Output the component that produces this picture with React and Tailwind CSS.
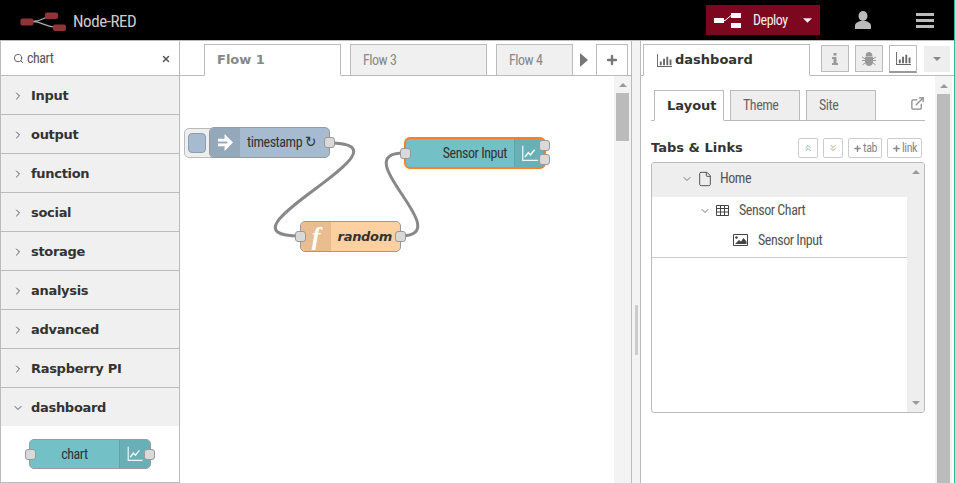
import { ChevronRight, ChevronDown, ChevronsUp, ChevronsDown, Search, X, Plus, ExternalLink, File } from "lucide-react";

const narrow = "font-['Roboto',sans-serif] [font-stretch:75%] tracking-[-0.45px]";
const bold = "font-['DejaVu_Sans',sans-serif] font-bold";
const boldTight = "font-['DejaVu_Sans',sans-serif] font-bold tracking-[-0.3px]";

const categories = ["Input", "output", "function", "social", "storage", "analysis", "advanced", "Raspberry PI"];

const ChartIcon = ({ className }) => (
  <svg viewBox="0 0 20 20" className={className} fill="none" stroke="currentColor">
    <path d="M1.5 1v17h18" strokeWidth="1.5" />
    <path d="M4 14l4-5 2.5 2.5 5-6" strokeWidth="1.8" />
  </svg>
);

const BarsIcon = ({ className }) => (
  <svg viewBox="0 0 16 14" className={className} fill="currentColor">
    <path d="M0 0h1v13h15v1H0zM3 8h2v4H3zM6.500 5h2v7h-2zM10 3h2v9h-2zM13.500 6h2v6h-2z" />
  </svg>
);

const Port = ({ className }) => (
  <div className={`absolute w-[11px] h-[11px] rounded-[3px] bg-[#d9d9d9] border border-[#999] ${className}`} />
);

const SidebarTab = ({ children, active }) => (
  <div className={`w-[70px] h-[31px] -mb-px pl-[12px] border border-[#bbb] flex items-center text-[13px] ${active ? `bg-white border-b-white text-[#333] ${bold}` : `bg-[#eee] text-[#666] text-[14px] ${narrow}`}`}>
    {children}
  </div>
);

const SmallBtn = ({ children, className }) => (
  <div className={`h-[20px] flex items-center justify-center border border-[#ccc] rounded-[2px] text-[12px] text-[#888] ${narrow} ${className}`}>
    {children}
  </div>
);

const Palette = () => (
  <aside className="w-[180px] h-full shrink-0 flex flex-col border-x border-b border-[#bbb] bg-white">
    <div className="h-[35px] shrink-0 flex items-center border-b border-[#bbb] pl-[12px] pr-[8px] pt-[1px]">
      <Search size={11} strokeWidth={2} className="text-[#555]" />
      <span className={`ml-[3px] text-[14px] text-[#555] flex-1 ${narrow}`}>chart</span>
      <X size={10} strokeWidth={3.500} className="text-[#555]" />
    </div>
    {categories.map((name) => (
      <div key={name} className="h-[39px] shrink-0 flex items-center bg-[#f0f0f0] border-b border-[#bbb] pl-[11px] pt-[1px]">
        <ChevronRight size={12} className="text-[#555]" />
        <span className={`ml-[7px] text-[13px] text-[#333] ${boldTight}`}>{name}</span>
      </div>
    ))}
    <div className="h-[38px] shrink-0 flex items-center bg-[#f0f0f0] pl-[11px] pt-[1px]">
      <ChevronDown size={12} className="text-[#555]" />
      <span className={`ml-[7px] text-[13px] text-[#333] ${boldTight}`}>dashboard</span>
    </div>
    <div className="flex-1 flex justify-center pt-[13px]">
      <div className="relative w-[122px] h-[30px] rounded-[5px] bg-[#73c0c6] border border-[#999] flex">
        <Port className="-left-[5px] top-[9px]" />
        <span className={`flex-1 flex items-center justify-center text-[14px] text-[#333] ${narrow}`}>chart</span>
        <div className="w-[31px] bg-[#68b0b6] border-l border-[#5ea4aa] flex items-center justify-center rounded-r-[5px]">
          <ChartIcon className="w-[16px] h-[16px] text-[#eef7f8]" />
        </div>
        <Port className="-right-[5px] top-[9px]" />
      </div>
    </div>
  </aside>
);

const Canvas = () => (
  <div className="relative flex-1 bg-white overflow-hidden">
    {/* wires and nodes sit on the flow canvas at their own coordinates */}
    <svg className="absolute left-0 top-0 w-[434px] h-[407px]" viewBox="180 76 434 407" fill="none" stroke="#888" strokeWidth="3">
      <path d="M329 143C425 143 204 236 300 236" />
      <path d="M400 236C460 236 344 153 404 153" />
    </svg>

    <div className="absolute left-[4px] top-[52px] w-[34px] h-[30px] rounded-[5px] bg-[#eee] border border-[#bbb] flex items-center pl-[3px]">
      <div className="w-[18px] h-[20px] rounded-[4px] bg-[#a6bbcf] border border-[#8a9db0]" />
    </div>
    <div className="absolute left-[29px] top-[51px] w-[121px] h-[31px] rounded-[5px] bg-[#a6bbcf] border border-[#999] flex">
      <div className="w-[30px] bg-[#94a8bb] rounded-l-[5px] flex items-center justify-center">
        <svg viewBox="0 0 16 18" className="w-[15px] h-[17px]">
          <path d="M0 5h7V0l9 9-9 9v-5H0z" fill="#fff" />
          <path d="M0 8h10v2H0z" fill="#94a8bb" />
        </svg>
      </div>
      <span className={`flex-1 flex items-center pl-[7px] text-[14px] text-[#333] ${narrow}`}>
        timestamp
        <span className="ml-[3px] font-['DejaVu_Sans',sans-serif] text-[15px] leading-none tracking-normal">↻</span>
      </span>
      <Port className="-right-[6px] top-[9px]" />
    </div>

    <div className="absolute left-[120px] top-[145px] w-[101px] h-[31px] rounded-[5px] bg-[#fdd0a2] border border-[#999] flex">
      <Port className="-left-[6px] top-[9px]" />
      <div className="w-[30px] bg-[#e9bd90] rounded-l-[5px] flex items-center justify-center">
        <span className="font-['Liberation_Serif',serif] italic font-bold text-[26px] leading-none text-white">f</span>
      </div>
      <span className={`flex-1 flex items-center justify-end pr-[8px] text-[13px] italic text-[#333] ${boldTight}`}>random</span>
      <Port className="-right-[6px] top-[9px]" />
    </div>

    <div className="absolute left-[224px] top-[61px] w-[142px] h-[32px] rounded-[6px] bg-[#73c0c6] border-2 border-[#ff7f27] flex">
      <Port className="-left-[6px] top-[9px]" />
      <span className={`flex-1 flex items-center justify-end pr-[7px] text-[14px] text-[#333] ${narrow}`}>Sensor Input</span>
      <div className="w-[30px] bg-[#68b0b6] border-l border-[#5ea4aa] flex items-center justify-center rounded-r-[4px]">
        <ChartIcon className="w-[18px] h-[17px] text-[#eef7f8]" />
      </div>
      <Port className="-right-[6px] top-[1px]" />
      <Port className="-right-[6px] top-[15px]" />
    </div>

    <div className="absolute right-0 top-0 bottom-0 w-[17px] bg-[#f3f3f3] flex flex-col items-center">
      <svg viewBox="0 0 8 4" className="w-[8px] h-[4px] mt-[7px]" fill="#999"><path d="M4 0l4 4H0z" /></svg>
      <div className="w-[13px] h-[48px] mt-[6px] bg-[#bbb]" />
    </div>
  </div>
);

const Workspace = () => (
  <main className="flex-1 min-w-0 h-full flex flex-col border-r border-[#bbb] bg-white">
    <div className="h-[35px] shrink-0 flex items-end border-b border-[#bbb] pl-[24px] bg-white">
      <div className={`w-[137px] h-[32px] -mb-px bg-white border border-[#bbb] border-b-white flex items-center pl-[12px] text-[13px] text-[#888] ${bold}`}>Flow 1</div>
      <div className={`ml-[9px] w-[137px] h-[31px] bg-[#f0f0f0] border border-b-0 border-[#bbb] flex items-center pl-[12px] text-[14px] text-[#888] ${narrow}`}>Flow 3</div>
      <div className={`ml-[9px] w-[77px] h-[31px] bg-[#f0f0f0] border border-b-0 border-[#bbb] flex items-center pl-[12px] text-[14px] text-[#888] ${narrow}`}>Flow 4</div>
      <div className="w-[23px] h-[31px] flex items-center justify-center">
        <svg viewBox="0 0 8 14" className="w-[8px] h-[14px] -ml-[1px]" fill="#777"><path d="M0 0l8 7-8 7z" /></svg>
      </div>
      <div className="w-[32px] h-[31px] border border-b-0 border-[#bbb] flex items-center justify-center">
        <Plus size={14} strokeWidth={4} className="text-[#777]" />
      </div>
    </div>
    <Canvas />
  </main>
);

const Tree = () => (
  <div className="mt-[4px] h-[251px] relative border border-[#bbb] rounded-[3px] overflow-hidden flex">
    <div className="flex-1 flex flex-col">
      <div className={`h-[34px] pb-[3px] bg-[#eee] flex items-center pl-[29px] text-[14px] text-[#555] ${narrow}`}>
        <ChevronDown size={12} className="text-[#777]" />
        <File size={16} strokeWidth={1.500} className="ml-[4px] text-[#555]" />
        <span className="ml-[7px]">Home</span>
      </div>
      <div className={`h-[27px] flex items-center pl-[47px] text-[14px] text-[#555] ${narrow}`}>
        <ChevronDown size={12} className="text-[#777]" />
        <svg viewBox="0 0 13 11" className="ml-[5px] w-[13px] h-[11px]" fill="none" stroke="#444">
          <path d="M.5.5h12v10H.5zM.5 3.500h12M.5 7h12M4.500 .5v10M8.500 .5v10" />
        </svg>
        <span className="ml-[10px]">Sensor Chart</span>
      </div>
      <div className={`h-[34px] pb-[1px] border-b border-[#ccc] flex items-center pl-[81px] text-[14px] text-[#555] ${narrow}`}>
        <svg viewBox="0 0 15 12" className="w-[15px] h-[12px]">
          <path d="M.5.5h14v11H.5z" fill="none" stroke="#444" />
          <circle cx="3.500" cy="3.500" r="1.300" fill="#444" />
          <path d="M2 10l4-4 2 1.500L10.500 4l3 3.500V10z" fill="#444" />
        </svg>
        <span className="ml-[10px]">Sensor Input</span>
      </div>
    </div>
    <div className="w-[17px] bg-[#eee] flex flex-col items-center justify-between py-[7px]">
      <svg viewBox="0 0 8 4" className="w-[8px] h-[4px]" fill="#999"><path d="M4 0l4 4H0z" /></svg>
      <svg viewBox="0 0 8 4" className="w-[8px] h-[4px]" fill="#999"><path d="M0 0h8L4 4z" /></svg>
    </div>
  </div>
);

const Sidebar = () => (
  <aside className="w-[314px] h-full shrink-0 flex flex-col border-l border-[#bbb] bg-white">
    <div className="h-[35px] shrink-0 flex items-end border-b border-[#bbb] pl-[2px]">
      <div className={`w-[167px] h-[32px] -mb-px bg-white border border-[#bbb] border-b-white flex items-center pl-[13px] text-[13px] text-[#333] ${bold}`}>
        <BarsIcon className="w-[15px] h-[13px] text-[#666] mr-[3px]" />
        dashboard
      </div>
      <div className="ml-[11px] mb-[3px] w-[28px] h-[27px] bg-[#eee] border border-[#bbb] flex items-center justify-center">
        <svg viewBox="0 0 6 12" className="w-[6px] h-[12px]" fill="#999">
          <path d="M1.500 0h3v2.500h-3zM0 4h4.500v6H6v2H0v-2h1.500V6H0z" />
        </svg>
      </div>
      <div className="ml-[6px] mb-[3px] w-[28px] h-[27px] bg-[#eee] border border-[#bbb] flex items-center justify-center">
        <svg viewBox="0 0 14 14" className="w-[14px] h-[14px]" fill="#999" stroke="#999">
          <path d="M4 3.500a3 3 0 0 1 6 0z" />
          <path d="M3.500 5h7v5a3.500 3.500 0 0 1-7 0z" />
          <path d="M0 5l3.500 2M14 5l-3.500 2M0 8.500h3.500M14 8.500h-3.500M.5 13l3-2.500M13.500 13l-3-2.500" fill="none" />
        </svg>
      </div>
      <div className="ml-[6px] mb-[2px] w-[28px] h-[28px] bg-white border border-b-2 border-[#bbb] border-b-[#999] flex items-center justify-center">
        <BarsIcon className="w-[15px] h-[13px] text-[#666]" />
      </div>
      <div className="ml-[7px] mb-[3px] w-[26px] h-[26px] bg-[#eee] flex items-center justify-center">
        <svg viewBox="0 0 8 4" className="w-[8px] h-[4px]" fill="#888"><path d="M0 0h8L4 4z" /></svg>
      </div>
    </div>
    <div className="flex-1 flex min-h-0">
      <div className="w-[294px] shrink-0 pl-[10px] pt-[13px]">
        <div className="w-[274px] h-[32px] flex items-end border-b border-[#bbb] pl-[3px] gap-[6px]">
          <SidebarTab active>Layout</SidebarTab>
          <SidebarTab>Theme</SidebarTab>
          <SidebarTab>Site</SidebarTab>
          <ExternalLink size={15} className="ml-[28px] mb-[9px] text-[#888]" />
        </div>
        <div className="w-[274px] mt-[17px] flex items-center justify-between">
          <span className={`text-[13px] text-[#333] ${bold}`}>Tabs &amp; Links</span>
          <div className="flex items-center gap-[5px] pr-[3px]">
            <SmallBtn className="w-[20px]"><ChevronsUp size={10} className="text-[#5a9fa6]" /></SmallBtn>
            <SmallBtn className="w-[20px]"><ChevronsDown size={10} className="text-[#b58a5a]" /></SmallBtn>
            <SmallBtn className="w-[34px]"><Plus size={9} strokeWidth={4} className="mr-[1px]" />tab</SmallBtn>
            <SmallBtn className="w-[35px]"><Plus size={9} strokeWidth={4} className="mr-[1px]" />link</SmallBtn>
          </div>
        </div>
        <div className="w-[274px]"><Tree /></div>
      </div>
      <div className="w-[17px] shrink-0 bg-[#f3f3f3] flex flex-col items-center">
        <svg viewBox="0 0 8 4" className="w-[8px] h-[4px] mt-[8px]" fill="#999"><path d="M4 0l4 4H0z" /></svg>
        <div className="w-[13px] flex-1 mt-[6px] bg-[#bbb]" />
      </div>
    </div>
  </aside>
);

export default function App() {
  return (
    <div className="w-[955px] h-[483px] overflow-hidden flex bg-white">
      <div className="w-[954px] shrink-0 flex flex-col">
        <header className="h-[40px] shrink-0 bg-black flex items-center">
          <svg viewBox="0 0 46 20" className="ml-[20px] mt-[4px] w-[46px] h-[20px]" fill="none">
            <path d="M13 9.500C22 9.500 25 4 32 4M13 9.500C22 9.500 25 15 36 15" stroke="#aaa" strokeWidth="1.300" />
            <rect x="0.500" y="6.500" width="13" height="7" rx="2" fill="#8f3537" />
            <rect x="25" y="0.500" width="13" height="6.500" rx="2" fill="#8f3537" />
            <rect x="33" y="12.500" width="13" height="6.500" rx="2" fill="#8f3537" />
          </svg>
          <span className={`ml-[7px] mt-[4px] text-[17px] text-[#ccc] ${narrow}`}>Node-RED</span>
          <div className={`ml-auto w-[114px] h-[30px] bg-[#7c071e] flex items-center pl-[8px] text-[14px] text-[#eee] ${narrow}`}>
            <svg viewBox="0 0 28 15" className="w-[28px] h-[15px]" fill="#fff">
              <path d="M0 5h10v5H0zM17 0h10v5H17zM17 10h10v5H17z" />
              <path d="M10 7.500h1l6-5" stroke="#fff" strokeWidth="1" fill="none" />
            </svg>
            <span className="ml-[11px]">Deploy</span>
            <svg viewBox="0 0 8 4" className="ml-auto mr-[8px] w-[9px] h-[5px]" fill="#eee"><path d="M0 0h8L4 4z" /></svg>
          </div>
          <svg viewBox="0 0 16 18" className="ml-[35px] w-[16px] h-[18px]" fill="#bbb">
            <ellipse cx="8" cy="5" rx="4.500" ry="5" />
            <path d="M0 18v-3c0-3 3-4 5-5h6c2 1 5 2 5 5v3z" />
          </svg>
          <div className="ml-[45px] mr-[20px] w-[18px] flex flex-col gap-[3px]">
            <div className="h-[3px] bg-[#bbb]" />
            <div className="h-[3px] bg-[#bbb]" />
            <div className="h-[3px] bg-[#bbb]" />
          </div>
        </header>
        <div className="flex-1 min-h-0 flex border-t border-[#bbb]">
          <Palette />
          <Workspace />
          <div className="w-[8px] shrink-0 h-full bg-[#f3f3f3] flex justify-center">
            <div className="w-[3px] h-[50px] mt-[264px] bg-[#ccc]" />
          </div>
          <Sidebar />
        </div>
      </div>
      <div className="w-[1px] shrink-0 h-full bg-[#2fb5a0]" />
    </div>
  );
}
